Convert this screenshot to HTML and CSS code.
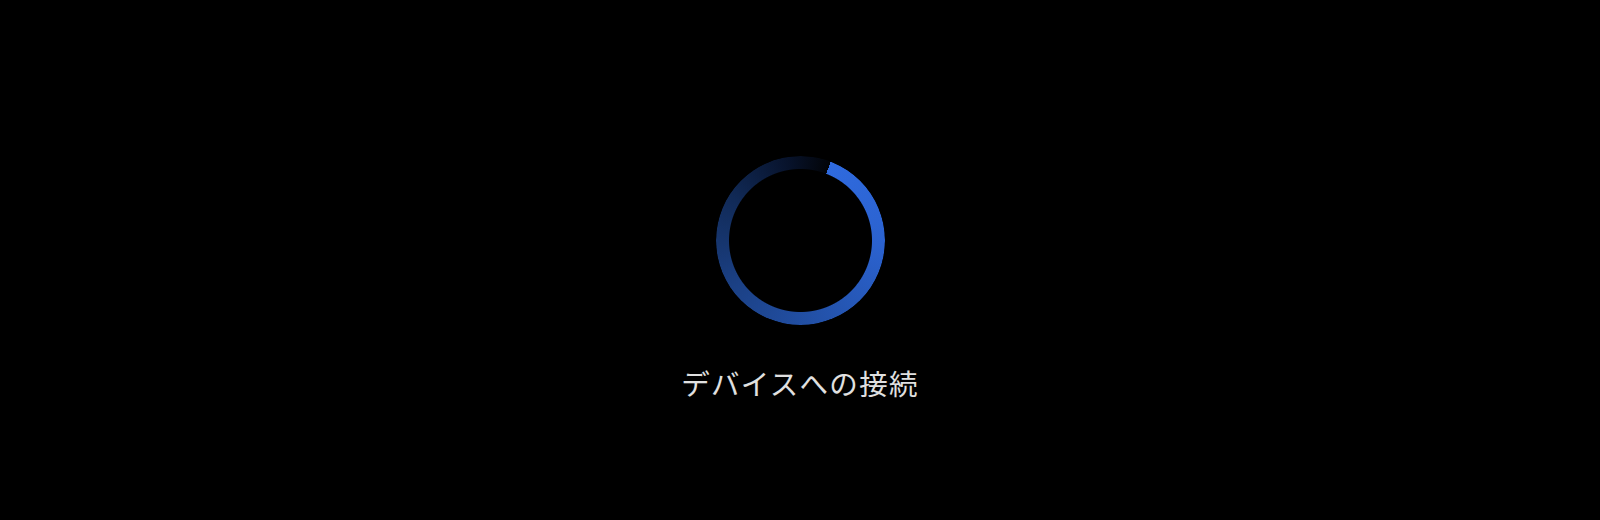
FILE: index.html
```html
<!DOCTYPE html>
<html lang="ja">
<head>
<meta charset="utf-8">
<title>デバイスへの接続</title>
<link rel="stylesheet" href="styles.css">
</head>
<body>
<main class="screen">
  <div class="ring" role="progressbar" aria-label="接続中"></div>
  <p class="label">デバイスへの接続</p>
</main>
</body>
</html>
```
FILE: styles.css
```css
html, body {
  margin: 0;
  padding: 0;
  background: #000;
  height: 100%;
}
.screen {
  height: 520px;
  display: flex;
  flex-direction: column;
  align-items: center;
  padding-top: 156px;
  box-sizing: border-box;
}
.ring {
  width: 169px;
  height: 169px;
  border-radius: 50%;
  background: conic-gradient(from 21deg,
    #2f6ade 0%,
    #2b62cf 20%,
    #2352aa 40%,
    #1b4084 60%,
    #112a57 78%,
    #07122a 92%,
    #020408 100%);
  -webkit-mask: radial-gradient(farthest-side, transparent calc(100% - 13.5px), #000 calc(100% - 12.5px));
  mask: radial-gradient(farthest-side, transparent calc(100% - 13.5px), #000 calc(100% - 12.5px));
}
.label {
  margin: 41px 0 0;
  font-family: "Noto Sans CJK JP", "Noto Sans", sans-serif;
  font-size: 28.5px;
  line-height: 1.2;
  color: #e0e0e0;
  letter-spacing: 1.3px;
}
```
